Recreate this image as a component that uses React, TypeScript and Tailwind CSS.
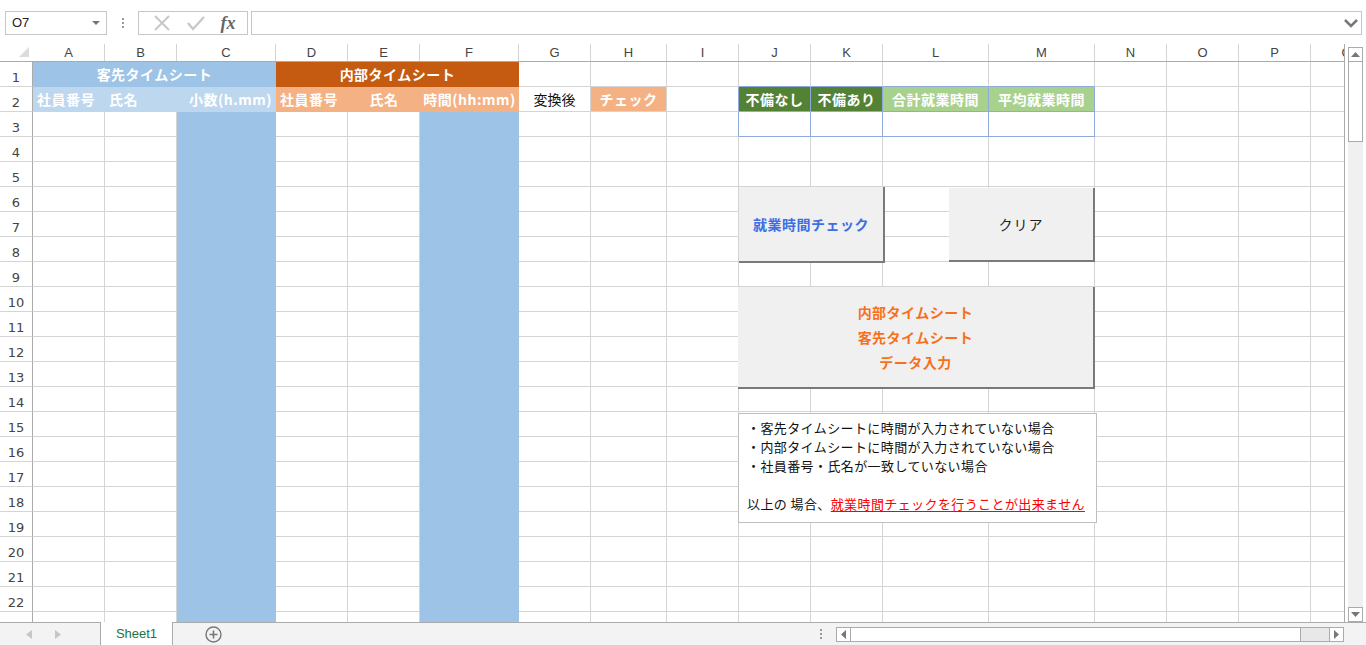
import React from 'react'

const FONT = 'font-["Noto_Sans_CJK_JP","Liberation_Sans",sans-serif]'

const cols = [
  { k: 'A', w: 'w-[72px]' },
  { k: 'B', w: 'w-[72px]' },
  { k: 'C', w: 'w-[99px]' },
  { k: 'D', w: 'w-[72px]' },
  { k: 'E', w: 'w-[72px]' },
  { k: 'F', w: 'w-[99px]' },
  { k: 'G', w: 'w-[72px]' },
  { k: 'H', w: 'w-[76px]' },
  { k: 'I', w: 'w-[72px]' },
  { k: 'J', w: 'w-[72px]' },
  { k: 'K', w: 'w-[72px]' },
  { k: 'L', w: 'w-[106px]' },
  { k: 'M', w: 'w-[106px]' },
  { k: 'N', w: 'w-[72px]' },
  { k: 'O', w: 'w-[72px]' },
  { k: 'P', w: 'w-[72px]' },
  { k: 'Q', w: 'w-[72px]' },
]

const grid = 'border-r border-b border-[#d4d4d4]'
const blueCol = 'bg-[#9dc3e6] border-r border-b border-[#9dc3e6]'

// 枠線の色（J2:M3 の青い罫線）
function cellClass(row: number, key: string) {
  if (key === 'C' || key === 'F') return blueCol
  if (row === 1 && (key === 'J' || key === 'K' || key === 'L' || key === 'M'))
    return 'border-r border-[#d4d4d4] border-b-[#8ea9db] border-b'
  if ((row === 2 || row === 3) && key === 'I') return 'border-b border-[#d4d4d4] border-r border-r-[#8ea9db]'
  if ((row === 2 || row === 3) && (key === 'J' || key === 'K' || key === 'L' || key === 'M'))
    return 'border-r border-b border-[#8ea9db]'
  return grid
}

function HeaderCell({ w, bg, children, align = 'center' }: any) {
  const al = align === 'left' ? 'justify-start pl-[4px]' : align === 'right' ? 'justify-end pr-[4px]' : 'justify-center'
  return (
    <div className={`${w} ${bg} shrink-0 h-full flex items-center ${al} text-white text-[14px] tracking-[0.5px] font-bold whitespace-nowrap overflow-hidden`}>
      {children}
    </div>
  )
}

function Row1() {
  return (
    <div className="flex h-[25px]">
      <RowNum n={1} />
      <HeaderCell w="w-[243px]" bg="bg-[#9dc3e6]">客先タイムシート</HeaderCell>
      <HeaderCell w="w-[243px]" bg="bg-[#c55a11]">内部タイムシート</HeaderCell>
      {cols.slice(6).map((c) => (
        <div key={c.k} className={`${c.w} h-full shrink-0 ${cellClass(1, c.k)}`} />
      ))}
    </div>
  )
}

function Row2() {
  return (
    <div className="flex h-[25px]">
      <RowNum n={2} />
      <HeaderCell w="w-[72px]" bg="bg-[#bdd7ee]" align="left">社員番号</HeaderCell>
      <HeaderCell w="w-[72px]" bg="bg-[#bdd7ee]" align="left">氏名</HeaderCell>
      <HeaderCell w="w-[99px]" bg="bg-[#bdd7ee]" align="right">小数(h.mm)</HeaderCell>
      <HeaderCell w="w-[72px]" bg="bg-[#f4b183]" align="left">社員番号</HeaderCell>
      <HeaderCell w="w-[72px]" bg="bg-[#f4b183]">氏名</HeaderCell>
      <HeaderCell w="w-[99px]" bg="bg-[#f4b183]">時間(hh:mm)</HeaderCell>
      <div className={`w-[72px] shrink-0 h-full flex items-center justify-center text-[14px] text-[#111] ${grid}`}>変換後</div>
      <div className="w-[76px] shrink-0 h-full flex items-center border-r border-b border-[#d4d4d4]">
        <HeaderCell w="w-full" bg="bg-[#f4b183]">チェック</HeaderCell>
      </div>
      <div className={`w-[72px] shrink-0 h-full ${cellClass(2, 'I')}`} />
      <div className="w-[72px] shrink-0 h-full flex items-center justify-center bg-[#548235] text-white font-bold text-[14px] tracking-[0.5px] border-r border-b border-[#8ea9db]">不備なし</div>
      <div className="w-[72px] shrink-0 h-full flex items-center justify-center bg-[#548235] text-white font-bold text-[14px] tracking-[0.5px] border-r border-b border-[#8ea9db]">不備あり</div>
      <div className="w-[106px] shrink-0 h-full flex items-center justify-center bg-[#a9d18e] text-white font-bold text-[14px] tracking-[0.5px] border-r border-b border-[#8ea9db]">合計就業時間</div>
      <div className="w-[106px] shrink-0 h-full flex items-center justify-center bg-[#a9d18e] text-white font-bold text-[14px] tracking-[0.5px] border-r border-b border-[#8ea9db]">平均就業時間</div>
      {cols.slice(13).map((c) => (
        <div key={c.k} className={`${c.w} h-full shrink-0 ${grid}`} />
      ))}
    </div>
  )
}

function RowNum({ n }: { n: number | null }) {
  return (
    <div className="w-[33px] shrink-0 h-full flex items-end justify-center pb-[1px] text-[#444] font-['DejaVu_Sans',sans-serif] border-r border-r-[#ababab] border-b border-b-[#d4d4d4]">
      <span className="text-[13px] leading-[14px]">{n}</span>
    </div>
  )
}

function Sheet() {
  const rows = Array.from({ length: 21 }, (_, i) => i + 3)
  return (
    <div className="relative flex-1 h-full overflow-hidden border-r border-[#ababab]">
      {/* 列見出し */}
      <div className="flex h-[18px] border-b border-[#ababab]">
        <div className="w-[33px] shrink-0 h-full flex items-end justify-end pr-[4px] pb-[4px]">
          <svg width="10" height="10" viewBox="0 0 10 10">
            <polygon points="10,0 10,10 0,10" fill="#dcdcdc" />
          </svg>
        </div>
        {cols.map((c) => (
          <div key={c.k} className={`${c.w} shrink-0 h-full flex items-center justify-center border-r border-[#d4d4d4] text-[13px] text-[#444] font-['Liberation_Sans',sans-serif]`}>
            {c.k}
          </div>
        ))}
      </div>
      <Row1 />
      <Row2 />
      {rows.map((r) => (
        <div key={r} className="flex h-[25px]">
          <RowNum n={r === 23 ? null : r} />
          {cols.map((c) => (
            <div key={c.k} className={`${c.w} shrink-0 h-full ${cellClass(r, c.k)}`} />
          ))}
        </div>
      ))}

      {/* 図形ボタン */}
      <div className="absolute left-[739px] top-[143px] w-[146px] h-[76px] bg-[#f0f0f0] border-r-2 border-b-2 border-[#7a7a7a] flex items-center justify-center text-[14px] font-bold tracking-[0.5px] text-[#3d6fe3]">
        就業時間チェック
      </div>
      <div className="absolute left-[949px] top-[144px] w-[146px] h-[74px] bg-[#f0f0f0] border-r-2 border-b-2 border-[#7a7a7a] flex items-center justify-center text-[14px] text-[#222] tracking-[1px]">
        クリア
      </div>
      <div className="absolute left-[738px] top-[243px] w-[357px] h-[102px] bg-[#f0f0f0] border-r-2 border-b-2 border-[#7a7a7a] flex flex-col items-center justify-center text-[14px] leading-[25px] font-bold tracking-[0.5px] text-[#f7701c]">
        <span>内部タイムシート</span>
        <span>客先タイムシート</span>
        <span>データ入力</span>
      </div>

      {/* テキストボックス */}
      <div className="absolute left-[738px] top-[369px] w-[359px] h-[110px] bg-white border border-[#bfbfbf] pl-[8px] pt-[4px] text-[13px] leading-[19px] tracking-[0.4px] text-[#111]">
        <div>・客先タイムシートに時間が入力されていない場合</div>
        <div>・内部タイムシートに時間が入力されていない場合</div>
        <div>・社員番号・氏名が一致していない場合</div>
        <div>&nbsp;</div>
        <div>
          以上の 場合、<span className="text-[#ff0000] underline underline-offset-2">就業時間チェックを行うことが出来ません</span>
        </div>
      </div>
    </div>
  )
}

function VScroll() {
  return (
    <div className="w-[21px] h-full flex flex-col pl-[3px] pr-[3px] pt-[3px] bg-white">
      <div className="h-[15px] border border-[#ababab] flex items-center justify-center">
        <svg width="9" height="5" viewBox="0 0 9 5">
          <polygon points="0,5 9,5 4.5,0" fill="#777" />
        </svg>
      </div>
      <div className="h-[80px] border border-[#ababab] border-t-0 bg-white" />
      <div className="flex-1 bg-[#f0f0f0]" />
      <div className="h-[15px] border border-[#ababab] flex items-center justify-center bg-white">
        <svg width="9" height="5" viewBox="0 0 9 5">
          <polygon points="0,0 9,0 4.5,5" fill="#777" />
        </svg>
      </div>
    </div>
  )
}

export default function App() {
  return (
    <div className={`w-[1366px] h-[645px] overflow-hidden bg-white flex flex-col ${FONT}`}>
      {/* 数式バー */}
      <div className="h-[44px] shrink-0 flex items-start pt-[11px] pl-[5px] pr-[4px] gap-0">
        <div className="w-[102px] h-[24px] border border-[#c6c6c6] flex items-center justify-between pl-[6px] pr-[6px] text-[13px] text-[#222] font-['Liberation_Sans',sans-serif]">
          <span>O7</span>
          <svg width="8" height="4" viewBox="0 0 8 4">
            <polygon points="0,0 8,0 4,4" fill="#777" />
          </svg>
        </div>
        <div className="w-[31px] h-[24px] flex flex-col items-center justify-center gap-[2px]">
          <span className="w-[2px] h-[2px] bg-[#999]" />
          <span className="w-[2px] h-[2px] bg-[#999]" />
          <span className="w-[2px] h-[2px] bg-[#999]" />
        </div>
        <div className="w-[110px] h-[24px] border border-[#c6c6c6] flex items-center justify-around pl-[6px] pr-[4px]">
          <svg width="18" height="16" viewBox="0 0 18 16">
            <path d="M2 1 L16 15 M16 1 L2 15" stroke="#c8c8c8" strokeWidth="2" fill="none" />
          </svg>
          <svg width="20" height="16" viewBox="0 0 20 16">
            <path d="M2 8 L7 14 L18 2" stroke="#c8c8c8" strokeWidth="2.4" fill="none" />
          </svg>
          <span className="text-[18px] italic font-bold text-[#666] font-['Liberation_Serif',serif] leading-none">fx</span>
        </div>
        <div className="ml-[3px] flex-1 h-[24px] border border-[#c6c6c6] flex items-center justify-end pr-[3px]">
          <svg width="14" height="9" viewBox="0 0 14 9">
            <path d="M1 1 L7 7 L13 1" stroke="#777" strokeWidth="2.5" fill="none" />
          </svg>
        </div>
      </div>

      {/* シート */}
      <div className="h-[578px] shrink-0 flex">
        <Sheet />
        <VScroll />
      </div>

      {/* シートタブ */}
      <div className="flex-1 flex items-stretch bg-[#f3f3f3] border-t border-[#ababab]">
        <div className="w-[100px] flex items-center justify-around pl-[14px] pr-[28px]">
          <svg width="6" height="9" viewBox="0 0 6 9">
            <polygon points="6,0 6,9 0,4.5" fill="#c6c6c6" />
          </svg>
          <svg width="6" height="9" viewBox="0 0 6 9">
            <polygon points="0,0 0,9 6,4.5" fill="#c6c6c6" />
          </svg>
        </div>
        <div className="w-[73px] -mt-[1px] bg-white border-l border-r border-[#ababab] flex items-center justify-center text-[13px] text-[#217346] font-['Liberation_Sans',sans-serif]">
          Sheet1
        </div>
        <div className="w-[80px] flex items-center justify-center">
          <svg width="17" height="17" viewBox="0 0 17 17">
            <circle cx="8.5" cy="8.5" r="7.5" stroke="#777" strokeWidth="1.4" fill="none" />
            <path d="M8.5 4.5 V12.5 M4.5 8.5 H12.5" stroke="#777" strokeWidth="1.6" />
          </svg>
        </div>
        <div className="flex-1 flex items-center justify-end pr-[22px]">
          <div className="flex flex-col gap-[2px] mr-[14px]">
            <span className="w-[2px] h-[2px] bg-[#999]" />
            <span className="w-[2px] h-[2px] bg-[#999]" />
            <span className="w-[2px] h-[2px] bg-[#999]" />
          </div>
          <div className="w-[508px] h-[15px] flex border border-[#ababab] bg-[#e8e8e8]">
            <div className="w-[14px] border-r border-[#ababab] bg-white flex items-center justify-center">
              <svg width="5" height="9" viewBox="0 0 5 9">
                <polygon points="5,0 5,9 0,4.5" fill="#777" />
              </svg>
            </div>
            <div className="w-[450px] bg-white border-r border-[#ababab]" />
            <div className="flex-1" />
            <div className="w-[14px] border-l border-[#ababab] bg-white flex items-center justify-center">
              <svg width="5" height="9" viewBox="0 0 5 9">
                <polygon points="0,0 0,9 5,4.5" fill="#777" />
              </svg>
            </div>
          </div>
        </div>
      </div>
    </div>
  )
}
